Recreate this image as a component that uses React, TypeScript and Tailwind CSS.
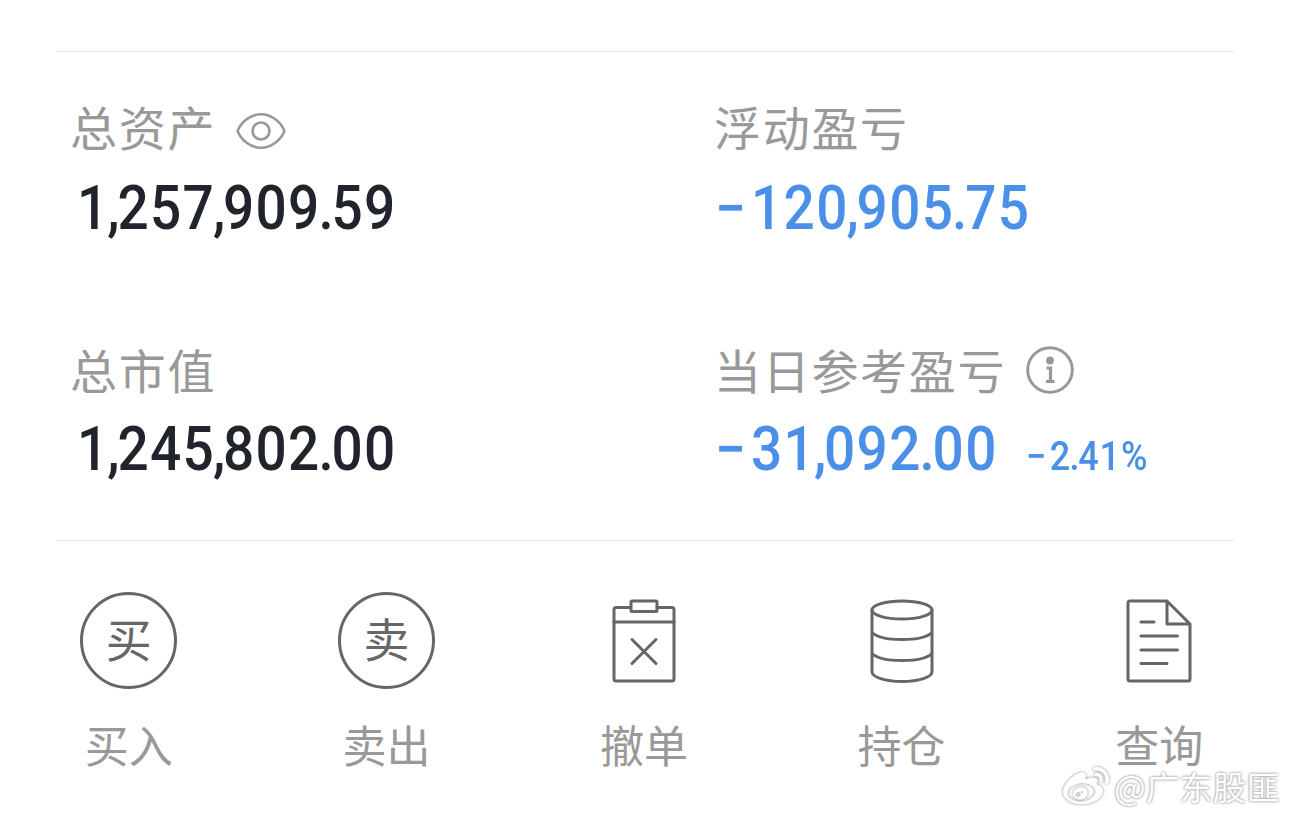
import React from 'react';
import { FaWeibo } from 'react-icons/fa';

interface AmountProps {
  value: string;
  className?: string;
}

// Narrowed digits with tight punctuation, close to a DIN numeral
const Amount: React.FC<AmountProps> = ({ value, className = '' }) => (
  <span className={`inline-block origin-left scale-x-[0.9] whitespace-nowrap font-['Roboto',sans-serif] font-medium ${className}`}>
    {value.split(/([,.−])/).map((part, i) => {
      if (part === '−') return <span key={i} className="mr-[0.07em]">{part}</span>;
      if (part === ',' || part === '.') return <span key={i} className="-ml-[0.04em] -mr-[0.065em]">{part}</span>;
      return part;
    })}
  </span>
);

const Label: React.FC<{ children: React.ReactNode }> = ({ children }) => (
  <span className="-mt-[6px] -ml-[2px] text-[47px] leading-[60px] tracking-[1.7px] whitespace-nowrap text-[#999999]">{children}</span>
);

const EyeIcon = () => (
  <svg width="50" height="38" viewBox="0 0 50 38" fill="none" stroke="#999999" strokeWidth="2.6">
    <path d="M1.600 19C5 10 14.500 2.300 25 2.300S45 10 48.400 19C45 28 35.500 35.700 25 35.700S5 28 1.600 19Z" strokeLinejoin="round" />
    <circle cx="25" cy="19" r="8.500" />
  </svg>
);

const InfoIcon = () => (
  <svg width="50" height="50" viewBox="0 0 50 50" fill="none" stroke="#999999">
    <circle cx="25" cy="25" r="22.300" strokeWidth="3" />
    <circle cx="25" cy="15.500" r="3.900" fill="#999999" stroke="none" />
    <path d="M21.500 23H25.500V36M21 36.500H29.500" strokeWidth="3.200" />
  </svg>
);

const CircleIcon: React.FC<{ text: string }> = ({ text }) => (
  <div className="w-[97px] h-[97px] rounded-full border-[3px] border-[#666666] flex items-center justify-center text-[46px] leading-none text-[#666666]">
    <span className="-mt-[7px]">{text}</span>
  </div>
);

const CancelIcon = () => (
  <svg width="66" height="86" viewBox="0 0 66 86" fill="none" stroke="#666666" strokeWidth="3" strokeLinejoin="round" strokeLinecap="round">
    <path d="M19.500 9.500H5Q3 9.500 3 11.500V81Q3 83 5 83H61Q63 83 63 81V11.500Q63 9.500 61 9.500H46" />
    <rect x="20" y="3" width="26" height="10.500" rx="1" />
    <path d="M3 24H63M21 41.500L45 65.500M45 41.500L21 65.500" />
  </svg>
);

const HoldingsIcon = () => (
  <svg width="66" height="86" viewBox="0 0 66 86" fill="none" stroke="#666666" strokeWidth="3">
    <ellipse cx="33" cy="12" rx="30" ry="9" />
    <path d="M3 12V74C3 79 16 83.500 33 83.500S63 79 63 74V12" />
    <path d="M3 34.500C7 38.500 18 41.500 33 41.500S59 38.500 63 34.500M3 55.500C7 59.500 18 62.500 33 62.500S59 59.500 63 55.500" />
  </svg>
);

const QueryIcon = () => (
  <svg width="68" height="86" viewBox="0 0 68 86" fill="none" stroke="#666666" strokeWidth="3" strokeLinejoin="round" strokeLinecap="round">
    <path d="M42 3H5Q3 3 3 5V81Q3 83 5 83H63Q65 83 65 81V26L42 3V26H65" />
    <path d="M16 24H29M16 38H52.500M16 52H52.500M16 65.500H42" />
  </svg>
);

const actions = [
  { label: '买入', icon: <CircleIcon text="买" /> },
  { label: '卖出', icon: <CircleIcon text="卖" /> },
  { label: '撤单', icon: <CancelIcon /> },
  { label: '持仓', icon: <HoldingsIcon /> },
  { label: '查询', icon: <QueryIcon /> },
];

const App: React.FC = () => {
  return (
    <div className="relative w-[1290px] h-[819px] overflow-hidden bg-white font-['Noto_Sans_CJK_SC',sans-serif]">
      <main className="pt-[51px]">
        <section className="mx-14 w-[1178px] h-[490px] border-y border-[#e8e8e8] grid grid-cols-[644px_1fr] grid-rows-[243px_1fr] pl-4 pt-[47px]">
          <div>
            <div className="flex items-center h-[60px]">
              <Label>总资产</Label>
              <div className="ml-[20px] mt-1"><EyeIcon /></div>
            </div>
            <Amount value="1,257,909.59" className="text-[61px] leading-[70px] mt-[14px] ml-[5px] tracking-[1.5px] text-[#20242b]" />
          </div>
          <div>
            <div className="flex items-center h-[60px]">
              <Label>浮动盈亏</Label>
            </div>
            <Amount value="−120,905.75" className="text-[61px] leading-[70px] mt-[14px] -ml-px tracking-[1.5px] text-[#4a90e8]" />
          </div>
          <div>
            <div className="flex items-center h-[60px]">
              <Label>总市值</Label>
            </div>
            <Amount value="1,245,802.00" className="text-[61px] leading-[70px] mt-[12px] ml-[5px] tracking-[1.5px] text-[#20242b]" />
          </div>
          <div>
            <div className="flex items-center h-[60px]">
              <Label>当日参考盈亏</Label>
              <div className="ml-[19px] -mt-[5px]"><InfoIcon /></div>
            </div>
            <div className="flex items-baseline mt-[12px]">
              <div className="w-[310px] -ml-px mr-px">
                <Amount value="−31,092.00" className="text-[61px] leading-[70px] tracking-[1.5px] text-[#4a90e8]" />
              </div>
              <Amount value="−2.41%" className="text-[40px] leading-[50px] tracking-[1px] text-[#4a90e8]" />
            </div>
          </div>
        </section>

        <nav className="grid grid-cols-5 w-[1288px] pt-[51px]">
          {actions.map(action => (
            <button key={action.label} className="flex flex-col items-center">
              <span className="h-[97px] flex items-center justify-center">{action.icon}</span>
              <span className="mt-[33px] text-[44px] leading-[44px] text-[#999999]">{action.label}</span>
            </button>
          ))}
        </nav>
      </main>

      <div className="absolute left-[1062px] top-[764px] flex items-center text-white">
        <FaWeibo className="w-[48px] h-[46px] [filter:drop-shadow(0_0_1.5px_#888888)]" />
        <span className="ml-1 -mt-[2px] text-[33.5px] leading-[34px] whitespace-nowrap [text-shadow:0_0_3px_#999999,0_0_2px_#aaaaaa]">@广东股匪</span>
      </div>
    </div>
  );
};

export default App;
